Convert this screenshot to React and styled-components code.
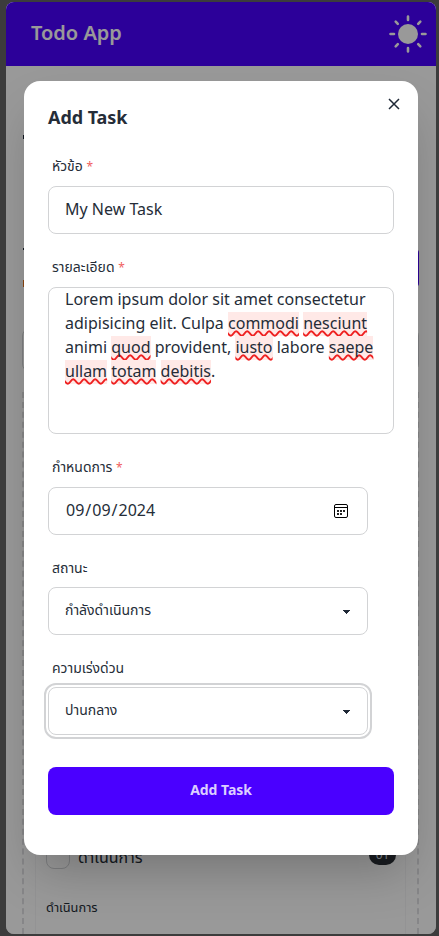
import React from "react";
import styled, { createGlobalStyle } from "styled-components";

const GlobalStyle = createGlobalStyle`
  *, *::before, *::after { box-sizing: border-box; }
  body {
    margin: 0;
    background: #3c3c3c;
    color: #252d38;
    font-family: "Noto Sans", "Noto Sans Thai", sans-serif;
    font-size: 16px;
    line-height: 24px;
  }
  input, select, button { font-family: inherit; color: inherit; }
`;

const Frame = styled.div`
  display: grid;
  width: 430px;
  height: 932px;
  margin: 2px 3px 2px 6px;
  border-radius: 8px;
  overflow: hidden;
  background: #fff;
`;

const Page = styled.div`
  grid-area: 1 / 1;
  display: flex;
  flex-direction: column;
  height: 932px;
  overflow: hidden;
`;

const Navbar = styled.header`
  flex: none;
  display: flex;
  align-items: center;
  justify-content: space-between;
  height: 64px;
  padding: 0 9px 0 25px;
  background: #4a00ff;
  color: #fff;
`;

const Brand = styled.div`
  font-size: 20px;
  font-weight: 600;
  line-height: 28px;
  padding-bottom: 2px;
`;

const Content = styled.main`
  flex: 1;
  display: flex;
  flex-direction: column;
  padding: 0 17px 0 16px;
`;

const Mark = styled.div`
  width: 3px;
  height: ${(p) => p.$height}px;
  margin-top: ${(p) => p.$gap}px;
  margin-left: 1px;
  background: ${(p) => p.$color};
`;

const AddButton = styled.div`
  align-self: flex-end;
  width: 100px;
  height: 38px;
  margin-top: -1px;
  border-radius: 4px;
  background: #4a00ff;
`;

const Search = styled.div`
  height: 44px;
  margin-top: 41px;
  border: 1px solid #d2d4d7;
  border-radius: 8px;
`;

const Board = styled.section`
  flex: 1;
  display: flex;
  margin-top: 20px;
  padding: 0 11px;
  border: dashed #dfe0e3;
  border-width: 2px 2px 0;
`;

const Card = styled.article`
  flex: 1;
  display: flex;
  flex-direction: column;
  justify-content: flex-end;
  padding: 0 8px 17px 10px;
  border: solid #f6f6f7;
  border-width: 0 1px;
`;

const CardHead = styled.div`
  display: flex;
  align-items: center;
  height: 26px;
`;

const Check = styled.span`
  width: 24px;
  height: 24px;
  border: 1px solid #d2d4d7;
  border-radius: 8px;
`;

const CardTitle = styled.span`
  flex: 1;
  margin-left: 8px;
  font-size: 16px;
`;

const Badge = styled.span`
  margin: -5px 1px 0 0;
  width: 27px;
  height: 20px;
  border-radius: 10px;
  background: #2b3036;
  color: #d7dde4;
  font-size: 12px;
  line-height: 20px;
  text-align: center;
`;

const CardText = styled.p`
  margin: 27px 0 0;
  font-size: 12.8px;
  line-height: 20px;
`;

const Overlay = styled.div`
  grid-area: 1 / 1;
  z-index: 1;
  display: grid;
  align-items: start;
  justify-content: start;
  padding: 79px 0 0 18px;
  background: rgba(0, 0, 0, 0.4);
`;

const Dialog = styled.section`
  width: 394px;
  height: 774px;
  padding: 0 24px;
  border-radius: 16px;
  background: #fff;
  box-shadow: 0 25px 50px -12px rgba(0, 0, 0, 0.25);
`;

const DialogHead = styled.div`
  display: flex;
  justify-content: space-between;
  height: 69px;
`;

const DialogTitle = styled.h3`
  margin: 22px 0 0;
  font-size: 18px;
  font-weight: 700;
  line-height: 28px;
  letter-spacing: -0.05px;
`;

const CloseButton = styled.button`
  display: grid;
  place-items: center;
  width: 32px;
  height: 32px;
  margin: 7px -16px 0 0;
  padding: 0;
  border: 0;
  background: none;
`;

const Form = styled.form`
  display: flex;
  flex-direction: column;
`;

const Field = styled.div`
  display: flex;
  flex-direction: column;
  align-items: flex-start;
  margin-bottom: ${(p) => p.$gap ?? 16}px;
`;

const Label = styled.label`
  height: 36px;
  padding: ${(p) => (p.$raised ? 6 : 7)}px 4px 0;
  font-size: 14px;
  line-height: 20px;
`;

const Required = styled.span`
  color: #f0605e;
  font-size: 12px;
`;

const controlBase = `
  height: 48px;
  padding: 0 16px 1px;
  border: 1px solid #d2d3d5;
  border-radius: 8px;
  background-color: #fff;
  outline: none;
`;

const Input = styled.input`
  ${controlBase}
  padding-bottom: 2px;
  width: 346px;
  font-size: 16px;
  line-height: 24px;
`;

const DateField = styled.div`
  ${controlBase}
  display: flex;
  align-items: center;
  justify-content: space-between;
  width: 320px;
  padding: 0 19px 0 17px;
`;

const DateParts = styled.span`
  display: flex;
  gap: 1px;
  padding-bottom: 2px;
`;

const Select = styled.select`
  ${controlBase}
  appearance: none;
  width: 320px;
  padding-bottom: 2px;
  font-size: 14px;
  line-height: 28px;
  background-image: linear-gradient(45deg, transparent 50%, #1f2937 50%),
    linear-gradient(135deg, #1f2937 50%, transparent 50%);
  background-position: calc(100% - 20px) calc(1px + 50%),
    calc(100% - 16.1px) calc(1px + 50%);
  background-size: 4px 4px, 4px 4px;
  background-repeat: no-repeat;
  outline: ${(p) => (p.$focused ? "2px solid #d2d3d5" : "none")};
  outline-offset: 2px;
`;

const TextArea = styled.div`
  width: 346px;
  height: 147px;
  padding: 0 16px;
  border: 1px solid #d2d3d5;
  border-radius: 8px;
`;

const TextBody = styled.p`
  margin: -1px 0 0;
`;

const Misspelled = styled.span`
  display: inline-block;
  height: 25px;
  margin-bottom: -1px;
  vertical-align: top;
  background: linear-gradient(transparent 1px, #ffe9e7 1px);
  text-decoration: underline wavy #ee2020 1.5px;
  text-decoration-skip-ink: none;
  text-underline-offset: 1px;
`;

const SubmitButton = styled.button`
  height: 48px;
  margin-top: 16px;
  padding: 0 0 3px;
  border: 0;
  border-radius: 8px;
  background: #4a00ff;
  && { color: #dccfff; }
  font-size: 14px;
  font-weight: 700;
  letter-spacing: -0.05px;
`;

function Sun() {
  return (
    <svg width="38" height="38" viewBox="-19 -19 38 38" fill="none">
      <circle r="10" fill="#fff" />
      <g stroke="#fff" strokeWidth="2.6" strokeLinecap="round">
        <path d="M0-17.5v3.5M0 14v3.5M-17.5 0h3.5M14 0h3.5" />
        <path d="M-12.3-12.3l2.1 2.1M12.3-12.3l-2.1 2.1M-12.3 12.3l2.1-2.1M12.3 12.3l-2.1-2.1" />
      </g>
    </svg>
  );
}

function Cross() {
  return (
    <svg width="12" height="12" viewBox="0 0 12 12" stroke="#1f2937" strokeWidth="1.5">
      <path d="M1 1l10 10M11 1L1 11" />
    </svg>
  );
}

function Calendar() {
  return (
    <svg width="14" height="14" viewBox="0 0 14 14" fill="none">
      <rect x="0.5" y="0.5" width="13" height="13" rx="1.5" stroke="#000" />
      <path d="M1 3.5h12" stroke="#000" />
      <path d="M3 6h2v2H3zM6 6h2v2H6zM9 6h2v2H9zM3 9h2v2H3zM6 9h2v2H6z" fill="#222" />
    </svg>
  );
}

export default function App() {
  return (
    <>
      <GlobalStyle />
      <Frame>
        <Page>
          <Navbar>
            <Brand>Todo App</Brand>
            <Sun />
          </Navbar>
          <Content>
            <Mark $gap={69} $height={4} $color="#1f2937" />
            <Mark $gap={109} $height={2} $color="#1f2937" />
            <AddButton />
            <Mark $gap={-7} $height={7} $color="#e8741c" />
            <Search />
            <Board>
              <Card>
                <CardHead>
                  <Check />
                  <CardTitle>ดำเนินการ</CardTitle>
                  <Badge>01</Badge>
                </CardHead>
                <CardText>ดำเนินการ</CardText>
              </Card>
            </Board>
          </Content>
        </Page>
        <Overlay>
          <Dialog>
            <DialogHead>
              <DialogTitle>Add Task</DialogTitle>
              <CloseButton type="button" aria-label="Close">
                <Cross />
              </CloseButton>
            </DialogHead>
            <Form>
              <Field $gap={17}>
                <Label $raised>หัวข้อ <Required>*</Required></Label>
                <Input defaultValue="My New Task" />
              </Field>
              <Field $gap={17}>
                <Label $raised>รายละเอียด <Required>*</Required></Label>
                <TextArea>
                  <TextBody>
                    Lorem ipsum dolor sit amet consectetur adipisicing elit. Culpa{" "}
                    <Misspelled>commodi</Misspelled> <Misspelled>nesciunt</Misspelled> animi{" "}
                    <Misspelled>quod</Misspelled> provident, <Misspelled>iusto</Misspelled> labore{" "}
                    <Misspelled>saepe</Misspelled> <Misspelled>ullam</Misspelled>{" "}
                    <Misspelled>totam</Misspelled> <Misspelled>debitis</Misspelled>.
                  </TextBody>
                </TextArea>
              </Field>
              <Field>
                <Label $raised>กำหนดการ <Required>*</Required></Label>
                <DateField>
                  <DateParts>
                    <span>09</span>
                    <span>/</span>
                    <span>09</span>
                    <span>/</span>
                    <span>2024</span>
                  </DateParts>
                  <Calendar />
                </DateField>
              </Field>
              <Field>
                <Label>สถานะ</Label>
                <Select defaultValue="doing">
                  <option value="doing">กำลังดำเนินการ</option>
                </Select>
              </Field>
              <Field>
                <Label>ความเร่งด่วน</Label>
                <Select $focused defaultValue="medium">
                  <option value="medium">ปานกลาง</option>
                </Select>
              </Field>
              <SubmitButton type="button">Add Task</SubmitButton>
            </Form>
          </Dialog>
        </Overlay>
      </Frame>
    </>
  );
}
